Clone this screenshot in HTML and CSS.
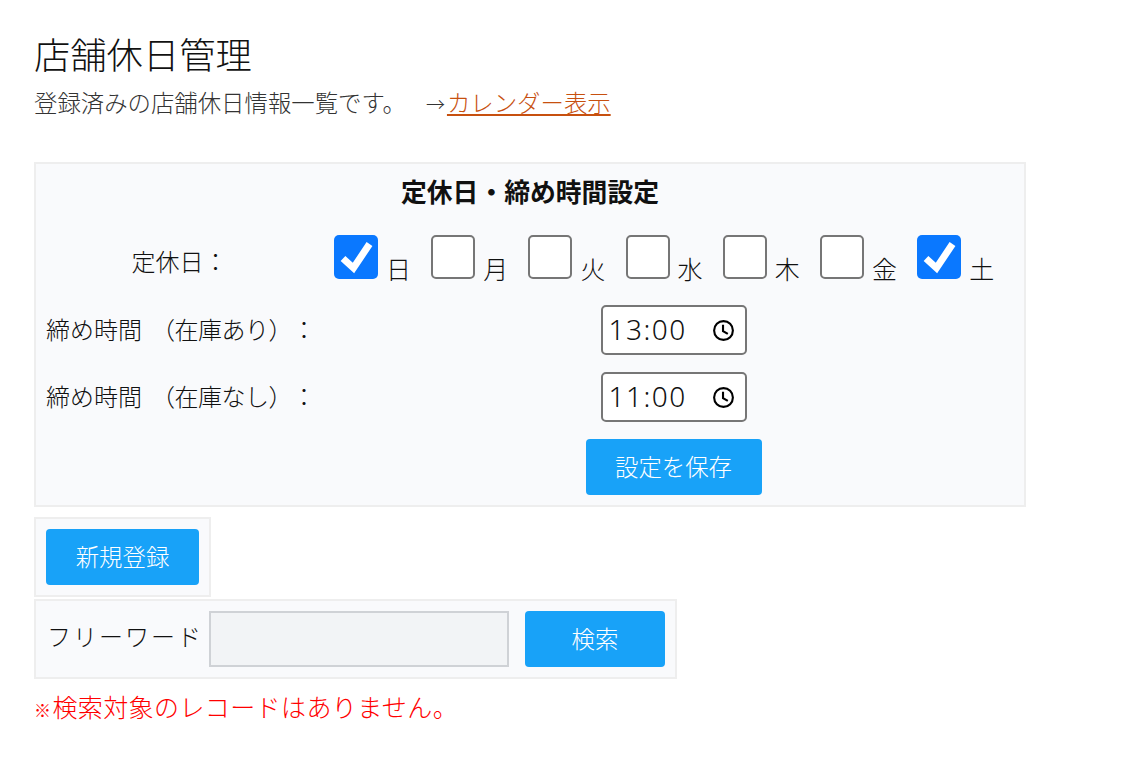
FILE: index.html
```html
<!DOCTYPE html>
<html lang="ja">
<head>
    <meta charset="UTF-8">
    <title>店舗休日管理</title>
    <link rel="stylesheet" href="styles.css">
</head>
<body>
    <h1 class="title">店舗休日管理</h1>
    <p class="lead">登録済みの店舗休日情報一覧です。<span class="arrow">→</span><a href="#" class="lead-link">カレンダー表示</a></p>

    <!-- Closed days and cut-off times -->
    <section class="panel settings">
        <div class="settings-title">定休日・締め時間設定</div>

        <div class="row row-days">
            <div class="row-label">定休日：</div>
            <div class="days">
                <label class="day"><span class="box checked"><svg viewBox="0 0 44 44"><path d="M9 23.500l10.500 9.500L35.500 9" fill="none" stroke="#fff" stroke-width="7"/></svg></span><span class="day-name">日</span></label>
                <label class="day"><span class="box"></span><span class="day-name">月</span></label>
                <label class="day"><span class="box"></span><span class="day-name">火</span></label>
                <label class="day"><span class="box"></span><span class="day-name">水</span></label>
                <label class="day"><span class="box"></span><span class="day-name">木</span></label>
                <label class="day"><span class="box"></span><span class="day-name">金</span></label>
                <label class="day"><span class="box checked"><svg viewBox="0 0 44 44"><path d="M9 23.500l10.500 9.500L35.500 9" fill="none" stroke="#fff" stroke-width="7"/></svg></span><span class="day-name">土</span></label>
            </div>
        </div>

        <div class="row row-time">
            <div class="row-label">締め時間<span class="stock">（在庫あり）</span>：</div>
            <div class="row-field">
                <div class="time-input">
                    <span class="time-value">13:00</span>
                    <svg class="clock" viewBox="0 0 24 24"><circle cx="12" cy="12" r="9.800" fill="none" stroke="#000" stroke-width="2.200"/><path d="M11.500 6v6.600l5 3" fill="none" stroke="#000" stroke-width="2.200"/></svg>
                </div>
            </div>
        </div>

        <div class="row row-time">
            <div class="row-label">締め時間<span class="stock">（在庫なし）</span>：</div>
            <div class="row-field">
                <div class="time-input">
                    <span class="time-value">11:00</span>
                    <svg class="clock" viewBox="0 0 24 24"><circle cx="12" cy="12" r="9.800" fill="none" stroke="#000" stroke-width="2.200"/><path d="M11.500 6v6.600l5 3" fill="none" stroke="#000" stroke-width="2.200"/></svg>
                </div>
            </div>
        </div>

        <div class="row row-save">
            <div class="row-label"></div>
            <div class="row-field">
                <button class="btn btn-save">設定を保存</button>
            </div>
        </div>
    </section>

    <!-- New record -->
    <div class="panel new-panel">
        <button class="btn btn-new">新規登録</button>
    </div>

    <!-- Search -->
    <div class="panel search-panel">
        <label class="search-label" for="keyword">フリーワード</label>
        <input class="search-input" type="text" id="keyword">
        <button class="btn btn-search">検索</button>
    </div>

    <p class="notice"><span class="notice-mark">※</span>検索対象のレコードはありません。</p>
</body>
</html>
```

FILE: styles.css
```css
/* General Reset */
* {
    margin: 0;
    padding: 0;
    box-sizing: border-box;
}

body {
    padding: 30px 34px 0;
    background-color: #fff;
    color: #111;
    font-family: "Noto Sans CJK JP", "Noto Sans", sans-serif;
    font-size: 24px;
    font-weight: 300;
    text-spacing-trim: space-all;
}

/* Heading */
.title {
    font-size: 36.300px;
    font-weight: 300;
    line-height: 46px;
    color: #111;
}

.lead {
    margin-top: 8px;
    font-size: 23.400px;
    line-height: 36px;
    color: #333;
    white-space: nowrap;
    text-spacing-trim: normal;
}

.arrow {
    margin-left: 20px;
    margin-right: 2px;
    font-size: 19px;
}

.lead-link {
    color: #c7500f;
    text-decoration: underline;
}

/* Panels */
.panel {
    background-color: #f9fafc;
    border: 2px solid #eeeeee;
}

.settings {
    width: 992px;
    height: 345px;
    margin-top: 40px;
    padding: 8px 0 0;
}

.settings-title {
    font-size: 25.800px;
    font-weight: 700;
    line-height: 38px;
    text-align: center;
}

.row {
    display: flex;
    align-items: center;
}

.row-label {
    width: 287px;
    flex-shrink: 0;
    text-align: center;
    white-space: nowrap;
}

.row-field {
    flex: 1;
    display: flex;
    justify-content: center;
}

/* Closed days */
.row-days {
    height: 48px;
    margin-top: 23px;
}

.row-days .row-label {
    padding-top: 6px;
}

.days {
    display: flex;
    padding-left: 11px;
}

.day {
    display: flex;
    align-items: flex-end;
    width: 97.200px;
}

.box {
    display: block;
    flex-shrink: 0;
    width: 44px;
    height: 44px;
    background-color: #fff;
    border: 2px solid #767676;
    border-radius: 5px;
}

.box.checked {
    background-color: #0a78ff;
    border: none;
}

.box svg {
    display: block;
    width: 44px;
    height: 44px;
}

.day-name {
    margin-left: 8px;
    margin-bottom: -3px;
    font-size: 25px;
    line-height: 28px;
}

/* Time fields */
.row-time {
    height: 50px;
    margin-top: 17px;
}

.row-days + .row-time {
    margin-top: 24px;
}

.row-time .row-label {
    padding: 0 0 4px 10px;
    text-align: left;
}

.stock {
    margin-left: 9px;
    letter-spacing: -0.500px;
}

.time-input {
    display: flex;
    align-items: center;
    justify-content: space-between;
    width: 146px;
    height: 50px;
    padding: 0 10px 0 6px;
    background-color: #fff;
    border: 2px solid #767676;
    border-radius: 5px;
    font-family: "Noto Sans", sans-serif;
    font-size: 28px;
    letter-spacing: 1.500px;
    color: #111;
}

.time-value {
    padding-bottom: 2px;
}

.clock {
    width: 23px;
    height: 23px;
}

/* Buttons */
.btn {
    display: block;
    height: 56px;
    padding-bottom: 2px;
    background-color: #18a2f8;
    border: none;
    border-radius: 4px;
    color: #fff;
    font-family: inherit;
    font-size: 23.400px;
    font-weight: 300;
}

.row-save {
    margin-top: 17px;
}

.btn-save {
    width: 176px;
}

.new-panel {
    width: 177px;
    margin-top: 10px;
    padding: 10px;
}

.btn-new {
    width: 153px;
}

/* Search */
.search-panel {
    display: flex;
    align-items: center;
    width: 643px;
    height: 80px;
    margin-top: 2px;
    padding-left: 11px;
}

.search-label {
    width: 162px;
    flex-shrink: 0;
    padding-bottom: 8px;
    letter-spacing: 2px;
    white-space: nowrap;
}

.search-input {
    width: 300px;
    height: 56px;
    background-color: #f2f4f6;
    border: 2px solid #cfd2d6;
}

.btn-search {
    width: 140px;
    margin-left: 16px;
}

.notice {
    margin-top: 9px;
    color: #f00;
    font-size: 25px;
    letter-spacing: 0.400px;
    line-height: 36px;
    text-spacing-trim: normal;
}

.notice-mark {
    margin-right: 1px;
    font-size: 17px;
    font-weight: 700;
}
```
